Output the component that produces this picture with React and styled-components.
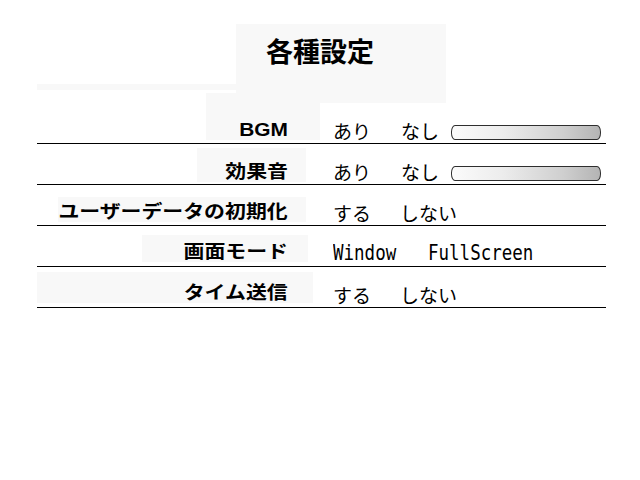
import React from 'react';
import styled, { createGlobalStyle } from 'styled-components';

const GlobalStyle = createGlobalStyle`
  html, body {
    margin: 0;
    padding: 0;
    background: #ffffff;
  }
  body {
    font-family: "Noto Sans CJK JP", "Liberation Sans", sans-serif;
    color: #000;
  }
`;

const SHADE = '#f8f8f8';
const TEXT_END = 288; // right edge of label text, page x
const LINE_LEFT = 37;

const Screen = styled.div`
  width: 640px;
  height: 480px;
  padding-top: 24px;
  box-sizing: border-box;
  overflow: hidden;
`;

const Header = styled.div`
  display: flex;
  align-items: flex-start;
`;

/* faint strip left of the title panel */
const Strip = styled.div`
  margin: 60px 0 0 ${LINE_LEFT}px;
  width: 199px;
  height: 6px;
  background: ${SHADE};
`;

const TitleBox = styled.div`
  width: 210px;
  height: 79px;
  box-sizing: border-box;
  padding: 12px 0 0 30px;
  background: ${SHADE};
`;

const Title = styled.h1`
  margin: 0;
  font-family: "Noto Sans CJK JP", sans-serif;
  font-size: 27px;
  line-height: 29px;
  font-weight: 700;
`;

const RowList = styled.div`
  margin-left: ${LINE_LEFT}px;
  width: 569px;
  display: flex;
  flex-direction: column;
`;

const Row = styled.div`
  height: 41px;
  box-sizing: border-box;
  border-bottom: 1px solid #000;
  display: flex;
  align-items: flex-end;
`;

const LabelCell = styled.div`
  width: ${TEXT_END - LINE_LEFT}px;
  height: 100%;
  display: flex;
  align-items: flex-end;
  justify-content: flex-end;
`;

/* shaded box behind each label, sized from the row's line */
const Label = styled.div`
  flex: none;
  box-sizing: border-box;
  width: ${({ $w }) => $w}px;
  height: ${({ $h }) => $h}px;
  margin-right: ${({ $over }) => -$over}px;
  margin-bottom: ${({ $lift }) => $lift}px;
  padding-right: ${({ $over }) => $over}px;
  padding-bottom: ${({ $pad }) => $pad}px;
  background: ${SHADE};
  display: flex;
  align-items: flex-end;
  justify-content: flex-end;
`;

const LabelText = styled.span`
  display: inline-block;
  font-family: "Liberation Sans", "Noto Sans CJK JP", sans-serif;
  font-size: 18px;
  line-height: 20px;
  font-weight: 700;
  white-space: nowrap;
  transform: scaleX(1.16);
  transform-origin: right bottom;
`;

const ValueCell = styled.div`
  margin-left: 45px;
  height: 100%;
  display: flex;
  align-items: flex-end;
`;

const Option = styled.span`
  flex: none;
  width: ${({ $w }) => ($w ? `${$w}px` : 'auto')};
  padding-bottom: 2px;
  font-family: "Noto Sans CJK JP", sans-serif;
  font-size: 19px;
  line-height: 20px;
  font-weight: 400;
  white-space: nowrap;
`;

const MonoText = styled.span`
  display: inline-block;
  font-family: "DejaVu Sans Mono", "Liberation Mono", monospace;
  font-size: 17.5px;
  transform: scaleY(1.17);
  transform-origin: left 80%;
`;

const Slider = styled.div`
  flex: none;
  width: 150px;
  height: 15px;
  margin-bottom: 3px;
  box-sizing: border-box;
  border: 1px solid #2e2e2e;
  border-radius: 4px / 7px;
  background: linear-gradient(to right, #fbfbfb 0%, #ececec 35%, #cfcfcf 75%, #b4b4b4 100%);
  box-shadow: inset 1px 0 0 #ffffff;
`;

const LINES = [143, 184, 225, 266, 307];

const rows = [
  { label: 'BGM', bg: { x: 206, w: 114, top: 93, bottom: 140 }, options: [['あり', 68], ['なし', 50]], slider: true },
  { label: '効果音', bg: { x: 197, w: 109, top: 148, bottom: 182 }, options: [['あり', 68], ['なし', 50]], slider: true },
  { label: 'ユーザーデータの初期化', bg: { x: 58, w: 248, top: 197, bottom: 222 }, options: [['する', 67], ['しない']] },
  { label: '画面モード', bg: { x: 142, w: 166, top: 235, bottom: 262 }, options: [['Window', 95], ['FullScreen']], mono: true },
  { label: 'タイム送信', bg: { x: 37, w: 276, top: 272, bottom: 303 }, options: [['する', 67], ['しない']] },
];

export default function App() {
  return (
    <Screen>
      <GlobalStyle />
      <Header>
        <Strip />
        <TitleBox>
          <Title>各種設定</Title>
        </TitleBox>
      </Header>
      <RowList>
        {rows.map((row, i) => {
          const line = LINES[i];
          const lift = line - row.bg.bottom;
          return (
            <Row key={row.label}>
              <LabelCell>
                <Label
                  $w={row.bg.w}
                  $h={row.bg.bottom - row.bg.top}
                  $over={row.bg.x + row.bg.w - TEXT_END}
                  $lift={lift}
                  $pad={Math.max(0, 2 - lift)}
                >
                  <LabelText>{row.label}</LabelText>
                </Label>
              </LabelCell>
              <ValueCell>
                {row.options.map(([text, w]) => (
                  <Option key={text} $w={w}>
                    {row.mono ? <MonoText>{text}</MonoText> : text}
                  </Option>
                ))}
                {row.slider && <Slider />}
              </ValueCell>
            </Row>
          );
        })}
      </RowList>
    </Screen>
  );
}
